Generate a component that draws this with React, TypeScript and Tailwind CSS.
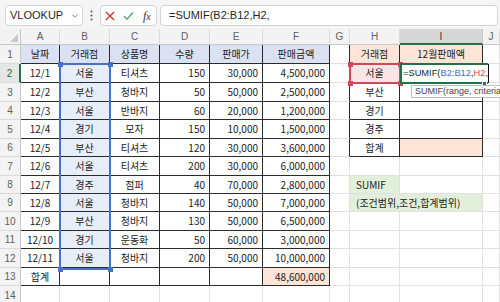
import { ChevronDown } from 'lucide-react';
import { ReactNode } from 'react';

const COLS = ['A', 'B', 'C', 'D', 'E', 'F', 'G', 'H', 'I', 'J'];

const sales: [string, string, string, string, string, string][] = [
  ['12/1', '서울', '티셔츠', '150', '30,000', '4,500,000'],
  ['12/2', '부산', '청바지', '50', '50,000', '2,500,000'],
  ['12/3', '서울', '반바지', '60', '20,000', '1,200,000'],
  ['12/4', '경기', '모자', '150', '10,000', '1,500,000'],
  ['12/5', '부산', '티셔츠', '120', '30,000', '3,600,000'],
  ['12/6', '서울', '티셔츠', '200', '30,000', '6,000,000'],
  ['12/7', '경주', '점퍼', '40', '70,000', '2,800,000'],
  ['12/8', '서울', '청바지', '140', '50,000', '7,000,000'],
  ['12/9', '부산', '청바지', '130', '50,000', '6,500,000'],
  ['12/10', '경기', '운동화', '50', '60,000', '3,000,000'],
  ['12/11', '서울', '청바지', '200', '50,000', '10,000,000'],
];

const branches = ['서울', '부산', '경기', '경주', '합계'];

const BASE = 'flex items-center whitespace-nowrap border-r border-b px-[4px] text-[10px] leading-none text-[#222]';
const LIGHT = 'border-[#e1e1e1]';
const DARK = 'border-[#2b2b2b]';

type Spec = { text?: ReactNode; cls: string; span?: boolean; skip?: boolean };

function cellSpec(row: number, col: number): Spec {
  // table 1: A1:F13
  if (col <= 5 && row <= 13) {
    if (row === 1) {
      const heads = ['날짜', '거래점', '상품명', '수량', '판매가', '판매금액'];
      return { text: heads[col], cls: `${DARK} justify-center bg-[#d9e1f2]` };
    }
    if (row === 13) {
      if (col === 0) return { text: '합계', cls: `${DARK} justify-center` };
      if (col === 5) return { text: '48,600,000', cls: `${DARK} justify-end bg-[#fce4d6]` };
      return { cls: DARK };
    }
    const d = sales[row - 2];
    if (col === 1) return { text: d[1], cls: `${DARK} justify-center bg-[#e8eef9]` };
    if (col <= 2) return { text: d[col], cls: `${DARK} justify-center` };
    return { text: d[col], cls: `${DARK} justify-end` };
  }
  if (col === 6 && row <= 6) return { cls: 'border-r-[#2b2b2b] border-b-[#e1e1e1]' };
  // table 2: H1:I6
  if ((col === 7 || col === 8) && row <= 6) {
    if (row === 1) {
      return { text: col === 7 ? '거래점' : '12월판매액', cls: `${DARK} justify-center bg-[#fce4d6]` };
    }
    if (col === 7) {
      const tint = row === 2 ? 'bg-[#f9e4e6]' : '';
      return { text: branches[row - 2], cls: `${DARK} justify-center ${tint}` };
    }
    if (row === 6) return { cls: `${DARK} bg-[#fce4d6]` };
    return { cls: DARK };
  }
  if (row === 8 && col === 7) return { text: 'SUMIF', cls: `${LIGHT} bg-[#e2efda] pl-[6px]` };
  if (row === 9 && col === 7) {
    return { text: '(조건범위,조건,합계범위)', cls: `${LIGHT} bg-[#e2efda] pl-[6px]`, span: true };
  }
  if (row === 9 && col === 8) return { cls: '', skip: true };
  return { cls: LIGHT };
}

function Handle({ x, y, color }: { x: number; y: number; color: string }) {
  return <div className={`absolute h-[5px] w-[5px] ${color}`} style={{ left: x - 2, top: y - 2 }} />;
}

function Toolbar() {
  return (
    <div className="flex h-[29px] items-start bg-[#f5f5f5] pt-[5px] pl-[5px] pr-[2px] font-['Liberation_Sans',sans-serif]">
      <div className="flex h-[21px] w-[78px] items-center justify-between rounded-[4px] border border-[#d4d4d4] bg-white pl-[4px] pr-[2px]">
        <span className="text-[11px] text-[#1f1f1f]">VLOOKUP</span>
        <ChevronDown size={10} strokeWidth={1.6} className="text-[#444]" />
      </div>
      <div className="flex h-[21px] w-[17px] items-center justify-center">
        <svg width="3" height="11" viewBox="0 0 3 11">
          <circle cx="1.5" cy="1.5" r="1" fill="#555" />
          <circle cx="1.5" cy="5.5" r="1" fill="#555" />
          <circle cx="1.5" cy="9.5" r="1" fill="#555" />
        </svg>
      </div>
      <div className="flex h-[21px] w-[57px] items-center rounded-[4px] border border-[#d4d4d4] bg-white pl-[4px]">
        <svg width="10" height="10" viewBox="0 0 10 10">
          <path d="M1 1L9 9M9 1L1 9" stroke="#c42b1c" strokeWidth="1.1" fill="none" />
        </svg>
        <svg width="11" height="10" viewBox="0 0 11 10" className="ml-[8px]">
          <path d="M1 5.2L4 8.3L10 1.3" stroke="#2e8b57" strokeWidth="1.1" fill="none" />
        </svg>
        <span className="ml-[9px] font-['Liberation_Serif',serif] text-[12px] italic text-[#333]">
          f<span className="text-[10px]">x</span>
        </span>
      </div>
      <div className="ml-[3px] flex h-[21px] flex-1 items-center rounded-[4px] border border-[#d4d4d4] bg-white pl-[8px]">
        <span className="text-[11px] text-[#1f1f1f]">=SUMIF(B2:B12,H2,</span>
      </div>
    </div>
  );
}

export default function App() {
  const rows = Array.from({ length: 14 }, (_, i) => i + 1);

  return (
    <div className="relative h-[302px] w-[500px] overflow-hidden bg-white font-['Noto_Sans_CJK_KR',sans-serif]">
      <Toolbar />
      <div className="grid grid-cols-[21px_39px_50px_50px_50px_53px_67px_20px_50px_83px_1fr] grid-rows-[16px_19px_19px_19px_18px_19px_18px_19px_18px_18px_19px_18px_19px_18px_19px]">
        {/* corner */}
        <div className="relative border-r border-b border-[#c8c8c8] bg-[#f3f3f3]">
          <svg width="8" height="8" viewBox="0 0 8 8" className="absolute right-[2px] bottom-[2px]">
            <path d="M8 0L8 8L0 8Z" fill="#c8c8c8" />
          </svg>
        </div>
        {COLS.map((c) =>
          c === 'I' ? (
            <div
              key={c}
              className="flex items-center justify-center border-r border-b-2 border-r-[#c8c8c8] border-b-[#217346] bg-[#d6d6d6] font-['Liberation_Sans',sans-serif] text-[10px] text-[#333]"
            >
              {c}
            </div>
          ) : (
            <div
              key={c}
              className="flex items-center justify-center border-r border-b border-r-[#dadada] border-b-[#c8c8c8] bg-[#f3f3f3] font-['Liberation_Sans',sans-serif] text-[10px] text-[#616161]"
            >
              {c}
            </div>
          )
        )}
        {rows.map((r) => (
          <div key={r} className="contents">
            {r === 2 ? (
              <div className="flex items-center justify-center border-r-2 border-b border-r-[#217346] border-b-[#dadada] bg-[#e6e6e6] font-['Liberation_Sans',sans-serif] text-[10px] text-[#217346]">
                {r}
              </div>
            ) : (
              <div className="flex items-center justify-center border-r border-b border-r-[#c8c8c8] border-b-[#dadada] bg-[#f3f3f3] font-['Liberation_Sans',sans-serif] text-[10px] text-[#616161]">
                {r}
              </div>
            )}
            {COLS.map((_, c) => {
              const s = cellSpec(r, c);
              if (s.skip) return null;
              return (
                <div key={c} className={`${BASE} ${s.cls} ${s.span ? 'col-span-2' : ''}`}>
                  {s.text}
                </div>
              );
            })}
          </div>
        ))}
      </div>

      {/* reference range B2:B12 */}
      <div className="absolute left-[59px] top-[63px] h-[207px] w-[52px] border-2 border-[#4472c4]" />
      <Handle x={60} y={64} color="bg-[#4472c4]" />
      <Handle x={110} y={64} color="bg-[#4472c4]" />
      <Handle x={60} y={269} color="bg-[#4472c4]" />
      <Handle x={110} y={269} color="bg-[#4472c4]" />

      {/* reference H2 */}
      <div className="absolute left-[349px] top-[63px] h-[21px] w-[52px] border-2 border-[#d0485a]" />
      <Handle x={350} y={64} color="bg-[#d0485a]" />
      <Handle x={400} y={64} color="bg-[#d0485a]" />
      <Handle x={350} y={83} color="bg-[#d0485a]" />
      <Handle x={400} y={83} color="bg-[#d0485a]" />

      {/* editing cell I2 */}
      <div className="absolute left-[400px] top-[63px] flex h-[21px] w-[88px] items-center border-y-2 border-l-2 border-[#217346] bg-white pl-[1px] font-['Liberation_Sans',sans-serif] text-[9.3px] text-[#1f1f1f]">
        <span>=SUMIF(</span>
        <span className="text-[#3c6fd1]">B2:B12</span>
        <span>,</span>
        <span className="text-[#d0485a]">H2</span>
        <span>,</span>
      </div>
      <div className="absolute left-[488px] top-[64px] h-[19px] w-px bg-[#111]" />
      <div className="absolute left-[482px] top-[81px] h-[5px] w-[5px] border border-white bg-[#217346]" />

      {/* tooltip, clipped by the window edge as in the screenshot */}
      <div className="absolute left-[411px] top-[85px] flex h-[13px] w-[89px] items-center overflow-hidden border-y border-l border-[#bdbdbd] bg-white px-[3px] font-['Liberation_Sans',sans-serif] text-[9px] whitespace-nowrap text-[#444]">
        SUMIF(range, criteria
      </div>
    </div>
  );
}
